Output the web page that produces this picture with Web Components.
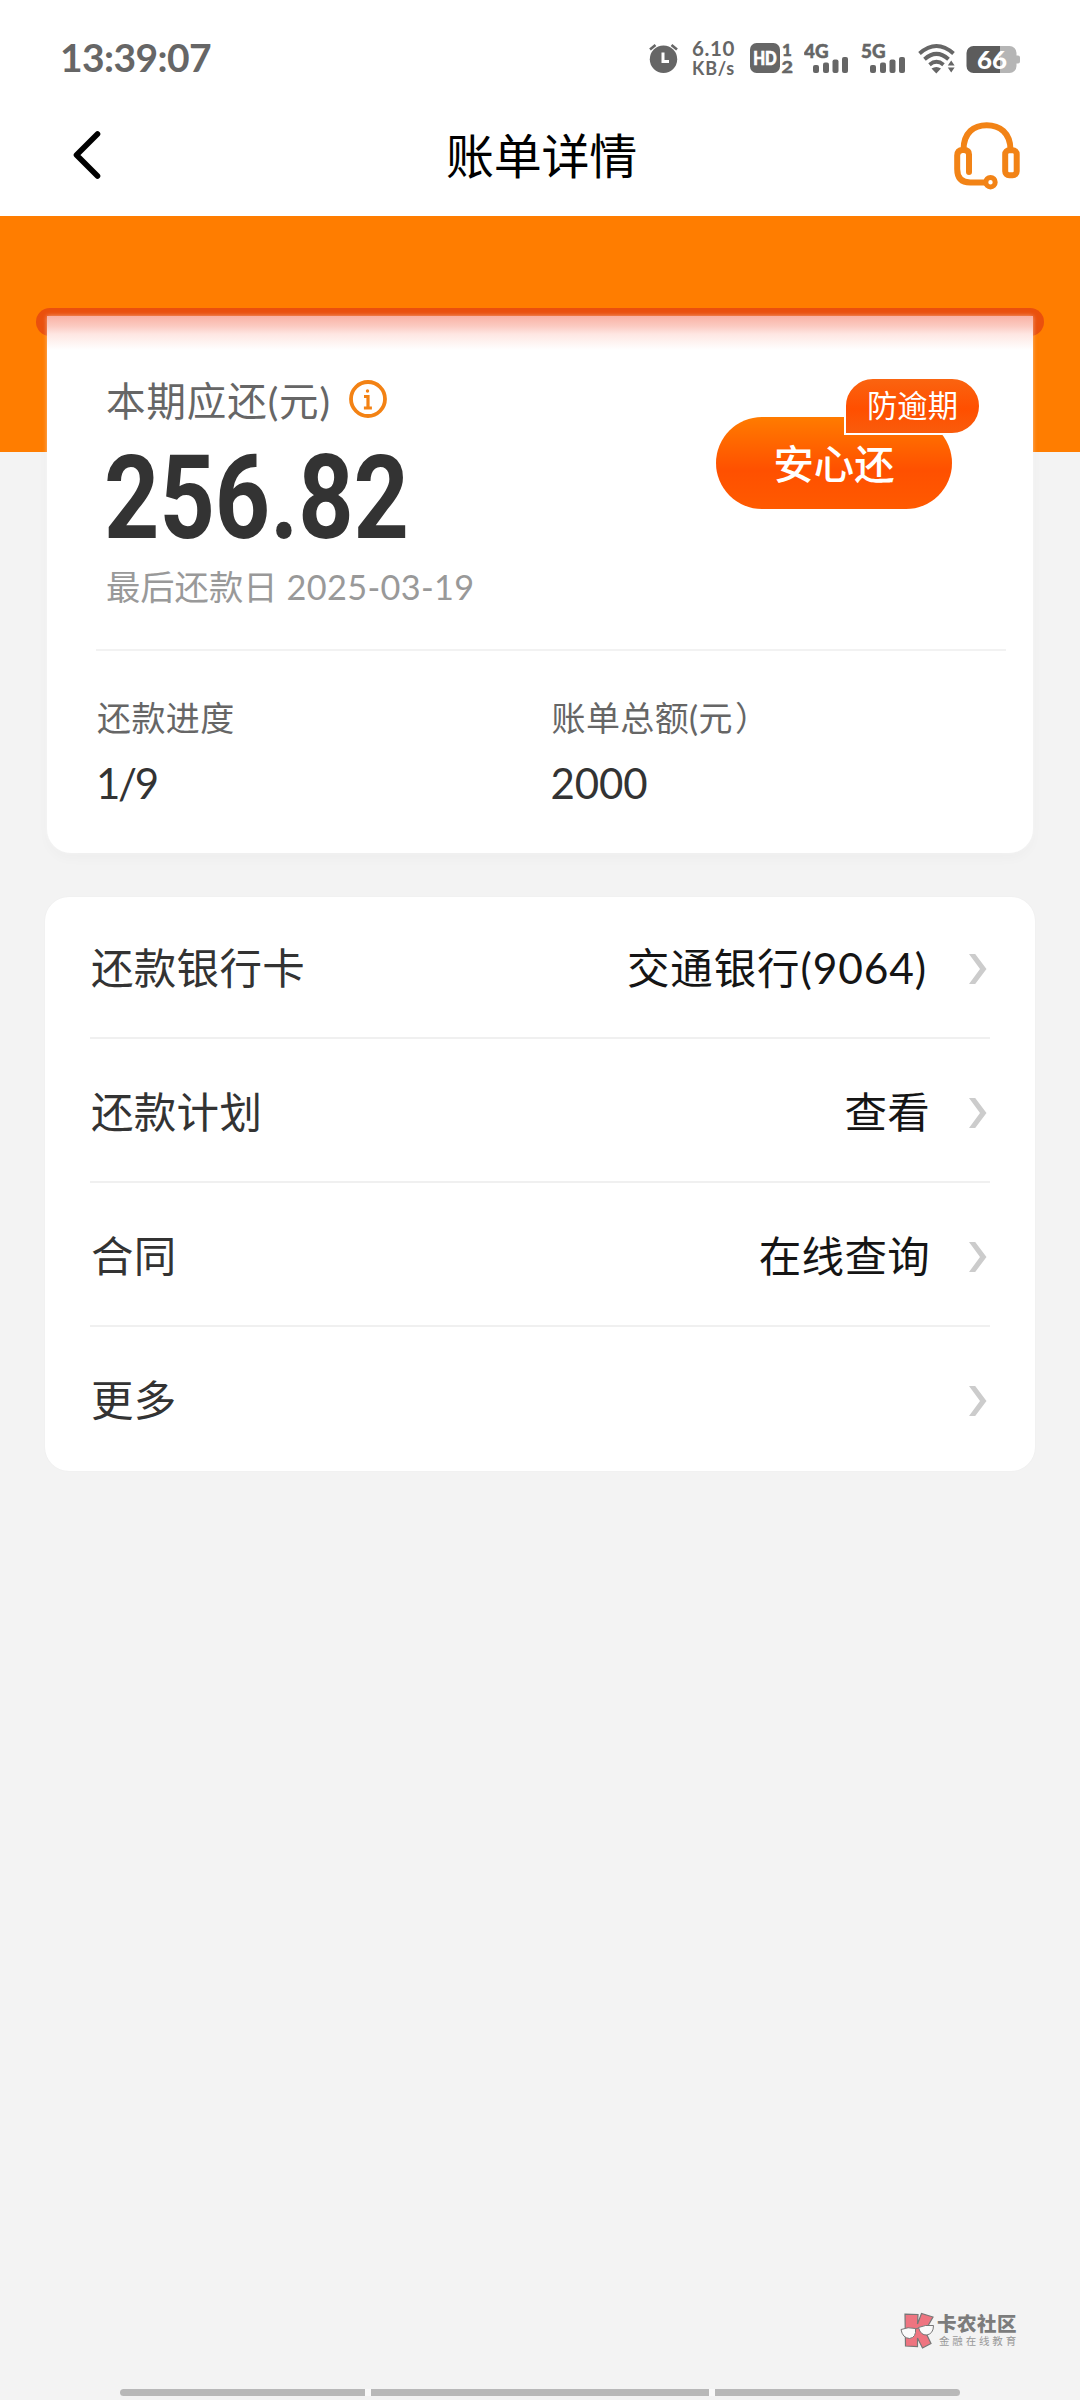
<!DOCTYPE html>
<html lang="zh-CN">
<head>
<meta charset="utf-8">
<title>账单详情</title>
<style>
html,body{margin:0;padding:0}
body{width:1080px;height:2400px;overflow:hidden;background:#f3f3f3;font-family:Lato,"Noto Sans CJK SC",sans-serif;color:#333}
</style>
</head>
<body>
<bill-page></bill-page>
<script>
const define = (name, html, init) => {
  const tpl = document.createElement('template');
  tpl.innerHTML = html;
  customElements.define(name, class extends HTMLElement {
    connectedCallback() {
      if (this.shadowRoot) return;
      this.attachShadow({mode: 'open'}).append(tpl.content.cloneNode(true));
      if (init) init(this, this.shadowRoot);
    }
  });
};

/* One line of text stretched to a given width, by tracking or (with "squeeze") by glyph width */
define('fit-text', `<style>
:host{display:block;white-space:nowrap;flex:none}
span{display:inline-block;transform-origin:0 50%}
</style><span><slot></slot></span>`, (el, root) => {
  const w = +el.getAttribute('w'), s = root.querySelector('span');
  el.style.width = w + 'px';
  const natural = s.getBoundingClientRect().width;
  if (el.hasAttribute('squeeze')) s.style.transform = `scaleX(${w / natural})`;
  else s.style.letterSpacing = (w - natural) / el.textContent.length + 'px';
});

define('signal-icon', `<style>
:host{display:block;width:44px;height:36px;color:#666}
text{font:900 19.5px Lato,sans-serif;fill:#666;stroke:#666;stroke-width:.5px}
</style>
<svg width="44" height="36" viewBox="0 0 44 36" fill="#666">
<text x="0" y="17.5" textLength="24.5" lengthAdjust="spacingAndGlyphs"></text>
<rect x="9" y="25" width="6" height="8" rx="2"/><rect x="19" y="22.5" width="6" height="10.5" rx="2"/>
<rect x="28.5" y="19.5" width="6" height="13.500" rx="2"/><rect x="38" y="17" width="6" height="16" rx="2"/>
</svg>`, (el, root) => root.querySelector('text').textContent = el.getAttribute('net'));

define('status-bar', `<style>
:host{display:flex;height:76px;padding:0 60px 0 60px;box-sizing:border-box;align-items:flex-end;color:#666}
.time{font:700 39px/37px Lato,sans-serif;margin-right:auto}
.icons{display:flex;height:36px}
svg{display:block}
.net{width:43px;margin:0 15px 0 14px;font:700 20.500px/16px Lato,sans-serif}
.net .unit{font-size:18px;line-height:24px}
.sig2{margin:0 13px}
.hd{margin-right:11px}
.wifi{margin-right:10px}
text{font-family:Lato,sans-serif}
</style>
<fit-text class="time" w="151">13:39:07</fit-text>
<div class="icons">
<svg width="29" height="36" viewBox="0 0 29 36"><circle cx="14.500" cy="19.300" r="13.700" fill="#666"/><path d="M1 9.500 6.500 5M28 9.500 22.500 5" stroke="#666" stroke-width="2.600"/><path d="M14 12.500v9h6" fill="none" stroke="#fff" stroke-width="3"/></svg>
<div class="net"><fit-text w="43">6.10</fit-text><fit-text class="unit" w="43">KB/s</fit-text></div>
<svg class="hd" width="43" height="36" viewBox="0 0 43 36"><rect y="3" width="30" height="30" rx="6.500" fill="#666"/><text x="3.200" y="24.800" font-size="18.500" font-weight="900" fill="#fff" stroke="#fff" stroke-width=".7" textLength="23.500" lengthAdjust="spacingAndGlyphs">HD</text><g font-size="17" font-weight="900" fill="#666" stroke="#666" stroke-width=".4"><text x="32" y="15.500">1</text><text x="31.500" y="32.800" textLength="11.500" lengthAdjust="spacingAndGlyphs">2</text></g></svg>
<signal-icon net="4G"></signal-icon>
<signal-icon class="sig2" net="5G"></signal-icon>
<svg class="wifi" width="38" height="36" viewBox="0 0 38 36"><g fill="none" stroke="#666" stroke-width="3.900"><path d="M1.500 13.500Q18.500-1.500 35.500 13.500"/><path d="M6.500 19.200Q18.500 8.500 30.500 19.200"/><path d="M11.500 24.700Q18.500 19 25.500 24.700"/></g><path d="M13.500 28.500Q18.500 25.500 23 28.500L18.300 33.500ZM29.800 25.500 33.200 20.500 36.600 25.500ZM29.800 27.500h6.800L33.200 32.500Z" fill="#666"/></svg>
<svg width="54" height="36" viewBox="0 0 54 36"><path d="M34 6h9.500a7 7 0 0 1 7 7v2.500h1.500a2 2 0 0 1 2 2v4a2 2 0 0 1-2 2h-1.500V26a7 7 0 0 1-7 7H34Z" fill="#b5b5b5"/><path d="M34 6H7.500a7 7 0 0 0-7 7v13a7 7 0 0 0 7 7H34Z" fill="#5c5c5c"/><text x="11" y="29" font-size="25.500" font-weight="900" fill="#fff" textLength="30" lengthAdjust="spacingAndGlyphs">66</text></svg>
</div>`);

define('nav-bar', `<style>
:host{display:flex;height:140px;box-sizing:border-box;padding:20px 57px 2px 70px;align-items:center;justify-content:space-between}
.title{font-size:48px;line-height:70px;color:#000;margin-left:28px;padding-top:2px;letter-spacing:-.3px}
svg{display:block}
</style>
<svg width="34" height="54" viewBox="0 0 34 54"><path d="M27.500 6 6.500 27 27.500 48" fill="none" stroke="#000" stroke-width="5.600" stroke-linecap="round" stroke-linejoin="round"/></svg>
<div class="title"><slot></slot></div>
<svg width="72" height="72" viewBox="0 0 72 72" fill="none" stroke="#f28316" stroke-width="6"><path d="M12.500 31C12.500 13.500 23 6.200 35.700 6.200S59.500 13.500 59.500 31"/><rect x="54.200" y="31.200" width="11.500" height="25" rx="4"/><path d="M18 53V35.500q0-4.500-5-4.500h-1.500Q6.200 31 6.200 36.500V50q0 13.500 13 13.500H34" stroke-linecap="round"/><circle cx="39.500" cy="63.200" r="4.700" stroke-width="5"/></svg>`);

define('info-icon', `<style>:host{display:block}svg{display:block}</style>
<svg width="38" height="38" viewBox="0 0 38 38"><circle cx="19" cy="19" r="17" fill="none" stroke="#f38214" stroke-width="3.800"/><circle cx="18.500" cy="11" r="1.700" fill="#f38214"/><path d="M15 15h5.600v11.500h2.300v3h-8V26.500h2.500v-8.500H15Z" fill="#f38214"/></svg>`);

define('pay-button', `<style>
:host{display:block;position:relative;width:236px;height:92px}
.btn{height:92px;border-radius:46px;background:linear-gradient(#ff7b00,#ff5000 58%,#ff5a00);color:#fff;font:500 40.300px/89px "Noto Sans CJK SC",sans-serif;text-align:center}
.badge{position:absolute;left:128px;top:-40px;border:2px solid #fff;width:133px;height:54px;border-radius:29px 29px 29px 0;background:linear-gradient(#fa6410,#ff4f00 55%,#f95c0c);color:#fff;font:400 30.300px/51px "Noto Sans CJK SC",sans-serif;text-align:center}
</style>
<div class="btn"><slot></slot></div><div class="badge"><slot name="badge"></slot></div>`);

define('bill-stat', `<style>
:host{display:block;width:455px}
.k{font:400 34px/48px Lato,"Noto Sans CJK SC",sans-serif;color:#666;letter-spacing:.4px}
.v{font:400 42px/54px Lato,sans-serif;color:#333;margin:14px 0 0 -1px}
</style><div class="k"><slot name="label"></slot></div><div class="v"><slot></slot></div>`);

define('bill-summary', `<style>
:host{display:block;height:236px;background:#ff7d00;padding-top:92px;box-sizing:border-box}
.slot{width:1008px;height:28px;border-radius:14px;background:#ea500d;margin:0 auto -20px 36px}
.card{position:relative;margin:0 47px;height:537px;box-sizing:border-box;padding:60px 27px 0 49px;border-radius:0 0 24px 24px;
background:linear-gradient(#f9b1a4,#fbcac1 10px,#fee6e2 18px,#fff 34px);box-shadow:0 6px 12px rgba(0,0,0,.025),0 0 4px rgba(255,255,255,.5)}
.top{display:flex;justify-content:space-between;height:273px;border-bottom:2px solid #f2f2f2}
.label{display:flex;align-items:center;gap:18px;padding-left:10px;height:52px;margin-top:-1px;font:400 39.500px/52px Lato,"Noto Sans CJK SC",sans-serif;color:#666}
.amount{font:700 117px/118px Roboto,sans-serif;color:#333;margin:12px 0 0 8px}
.due{display:flex;gap:9px;margin:5px 0 0 10px;font:400 34.300px/50px Lato,"Noto Sans CJK SC",sans-serif;color:#999}
pay-button{margin:41px 54px 0 0}
.stats{display:flex;padding:43px 0 0 1px}
info-icon{margin-top:-4px}
</style>
<div class="slot"></div>
<div class="card">
<div class="top"><div>
<div class="label"><fit-text w="225">本期应还(元)</fit-text><info-icon></info-icon></div>
<fit-text class="amount" w="305" squeeze>256.82</fit-text>
<div class="due"><span>最后还款日</span><fit-text w="188">2025-03-19</fit-text></div>
</div><pay-button>安心还<span slot="badge">防逾期</span></pay-button></div>
<div class="stats">
<bill-stat><span slot="label">还款进度</span><fit-text w="61">1/9</fit-text></bill-stat>
<bill-stat><span slot="label">账单总额(元<span style="margin-left:2px">）</span></span><fit-text w="97">2000</fit-text></bill-stat>
</div></div>`);

define('menu-row', `<style>
:host{display:flex;height:144px;box-sizing:border-box;border-bottom:2px solid #f0f0f0;align-items:center;font:400 42.500px/64px Lato,"Noto Sans CJK SC",sans-serif;padding:3px 3px 0 1px;letter-spacing:.3px}
:host([last]){border-color:transparent}
.l{color:#333;margin-right:auto}
.v{color:#151515;margin-right:38px}
svg{display:block;margin-top:3px}
</style><div class="l"><slot></slot></div><div class="v"><slot name="value"></slot></div>
<svg width="19" height="30" viewBox="0 0 19 30"><path d="M1 0H7.200L18.500 15 7.200 30H1L12 15Z" fill="#ccc"/></svg>`);

define('menu-card', `<style>
:host{display:block;margin:445px 45px 0;height:574px;box-sizing:border-box;border-radius:24px;background:#fff;padding:0 45px;box-shadow:0 0 2px rgba(0,0,0,.04);overflow:hidden}
.in{margin-top:-2px}
</style><div class="in"><slot></slot></div>`);

define('brand-mark', `<style>
:host{display:flex;margin:841px 62px 0 900px;height:38px;gap:2px}
svg{display:block;flex:none}
.n{font:900 19.500px/20px "Noto Sans CJK SC",sans-serif;color:#7c7c7c;margin-top:1px}
.s{font:400 10.500px/12px "Noto Sans CJK SC",sans-serif;color:#999;margin:2px 0 0 2px}
</style>
<svg width="35" height="38" viewBox="0 0 35 38"><path d="M5 2.200 18 2.500 17.500 12 21.500 1.500 33 5 25 19 31 31.500 22.500 36 17.500 26V34.500L5.500 34Z" fill="#ee7480" stroke="#777" stroke-width="1.200"/><g fill="#fafafa" stroke="#777"><path d="M1 17.500Q8 14.500 15.500 16.500 16.500 25.500 9.500 26.500 2.500 26 1 17.500Z"/><path d="M18.500 15.500Q25 12.500 33.500 13.500 33.500 21.500 27 23 20.500 23.500 18.500 15.500Z"/><path d="M15.500 17 18.500 16"/></g></svg>
<div><fit-text class="n" w="80">卡农社区</fit-text><fit-text class="s" w="80">金融在线教育</fit-text></div>`);

define('gesture-bar', `<style>
:host{display:flex;gap:6px;margin:39px 120px 0;height:7px;background:#f9f9f9;border-radius:4px;overflow:hidden}
i{flex:245 0 0;background:#b8b8b8}i:nth-of-type(2){flex-grow:338}
</style><i></i><i></i><i></i>`);

define('bill-page', `<style>:host{display:block;width:1080px;height:2400px;background:#f3f3f3}header{background:#fff}</style>
<header><status-bar></status-bar><nav-bar>账单详情</nav-bar></header>
<bill-summary></bill-summary>
<menu-card>
<menu-row>还款银行卡<fit-text slot="value" w="303">交通银行(9064)</fit-text></menu-row>
<menu-row>还款计划<span slot="value">查看</span></menu-row>
<menu-row>合同<span slot="value">在线查询</span></menu-row>
<menu-row last>更多</menu-row>
</menu-card>
<brand-mark></brand-mark>
<gesture-bar></gesture-bar>`);
</script>
</body>
</html>
